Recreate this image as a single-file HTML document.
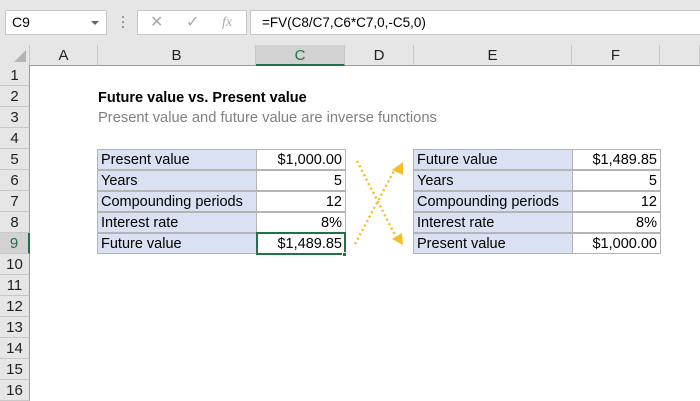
<!DOCTYPE html>
<html><head><meta charset="utf-8"><style>
*{margin:0;padding:0;box-sizing:border-box}
body{width:700px;height:400px;overflow:hidden;background:#fff;font-family:"Liberation Sans",Arial,sans-serif;position:relative}
.a{position:absolute}
.tb{left:0;top:0;width:700px;height:45px;background:#e6e6e6}
.box{background:#fff;border:1px solid #c6c6c6}
.hd{top:45px;height:21px;background:#e6e6e6;border-bottom:1px solid #9b9b9b;border-right:1px solid #c8c8c8;font-size:15px;color:#222;text-align:center;line-height:21px}
.rh{left:0;width:30px;height:21px;background:#e6e6e6;border-right:1px solid #9b9b9b;border-bottom:1px solid #c8c8c8;font-size:15px;color:#222;text-align:center;line-height:21px}
.c{height:21px;border:1px solid #b4b4b4;font-size:14.5px;line-height:20px;padding:0 3px;color:#000;white-space:nowrap}
.l{background:#d9e1f2}
.r{text-align:right}
</style></head><body>
<div class="a tb"></div>
<div class="a box" style="left:5px;top:10px;width:102px;height:25px;font-size:14px;line-height:23px;padding-left:6px">C9<span class="a" style="right:7px;top:10px;border:4px solid transparent;border-top:4px solid #666"></span></div>
<div class="a" style="left:122px;top:16px;width:2px;height:2px;background:#999;box-shadow:0 5px #999,0 10px #999"></div>
<div class="a box" style="left:137px;top:10px;width:110px;height:25px;color:#aaa;font-size:16px;line-height:23px">
<span class="a" style="left:12px">✕</span><span class="a" style="left:48px">✓</span><span class="a" style="left:84px;font-family:'Liberation Serif',serif;font-style:italic;font-size:14px">fx</span></div>
<div class="a box" style="left:250px;top:10px;width:460px;height:25px;font-size:13.5px;line-height:23px;padding-left:11px">=FV(C8/C7,C6*C7,0,-C5,0)</div>
<div class="a hd" style="left:0;width:30px"><span class="a" style="right:3px;bottom:3px;border:6px solid transparent;border-right-color:#b4b4b4;border-bottom-color:#b4b4b4"></span></div>
<div class="a hd" style="left:30px;width:68px">A</div>
<div class="a hd" style="left:98px;width:158px">B</div>
<div class="a hd" style="left:256px;width:89px;background:#d2d2d2;border-bottom:2px solid #217346;color:#217346">C</div>
<div class="a hd" style="left:345px;width:69px">D</div>
<div class="a hd" style="left:414px;width:158px">E</div>
<div class="a hd" style="left:572px;width:88px">F</div>
<div class="a hd" style="left:660px;width:40px"></div>
<div id="rows"></div>
<script>
var h='';for(var i=1;i<=16;i++){var t=65+(i-1)*21;h+='<div class="a rh" style="top:'+t+'px;'+(i==9?'background:#d2d2d2;color:#217346;border-right:2px solid #217346':'')+'">'+i+'</div>';}
document.getElementById('rows').innerHTML=h;
</script>
<div class="a" style="left:98px;top:90px;font-size:14.5px;font-weight:bold">Future value vs. Present value</div>
<div class="a" style="left:98px;top:110px;font-size:14.7px;color:#808080">Present value and future value are inverse functions</div>
<div class="a c l" style="left:97px;top:149px;width:160px">Present value</div><div class="a c r" style="left:256px;top:149px;width:90px">$1,000.00</div>
<div class="a c l" style="left:97px;top:170px;width:160px">Years</div><div class="a c r" style="left:256px;top:170px;width:90px">5</div>
<div class="a c l" style="left:97px;top:191px;width:160px">Compounding periods</div><div class="a c r" style="left:256px;top:191px;width:90px">12</div>
<div class="a c l" style="left:97px;top:212px;width:160px">Interest rate</div><div class="a c r" style="left:256px;top:212px;width:90px">8%</div>
<div class="a c l" style="left:97px;top:233px;width:160px">Future value</div><div class="a c r" style="left:256px;top:233px;width:90px">$1,489.85</div>
<div class="a" style="left:256px;top:232px;width:90px;height:23px;border:2px solid #217346"></div>
<div class="a" style="left:342px;top:252px;width:5px;height:5px;background:#217346;border:1px solid #fff"></div>
<div class="a c l" style="left:413px;top:149px;width:160px">Future value</div><div class="a c r" style="left:572px;top:149px;width:89px">$1,489.85</div>
<div class="a c l" style="left:413px;top:170px;width:160px">Years</div><div class="a c r" style="left:572px;top:170px;width:89px">5</div>
<div class="a c l" style="left:413px;top:191px;width:160px">Compounding periods</div><div class="a c r" style="left:572px;top:191px;width:89px">12</div>
<div class="a c l" style="left:413px;top:212px;width:160px">Interest rate</div><div class="a c r" style="left:572px;top:212px;width:89px">8%</div>
<div class="a c l" style="left:413px;top:233px;width:160px">Present value</div><div class="a c r" style="left:572px;top:233px;width:89px">$1,000.00</div>
<svg class="a" style="left:0;top:0" width="700" height="400">
<g stroke="#f4bd2a" stroke-width="2.5" stroke-dasharray="2 3" fill="none">
<line x1="357" y1="161" x2="396" y2="237"/>
<line x1="355" y1="244" x2="395" y2="169"/>
</g>
<g fill="#f4bd2a">
<polygon points="403,162 403,175 392,170"/>
<polygon points="403,245 392,239 402,233"/>
</g>
</svg>
</body></html>
